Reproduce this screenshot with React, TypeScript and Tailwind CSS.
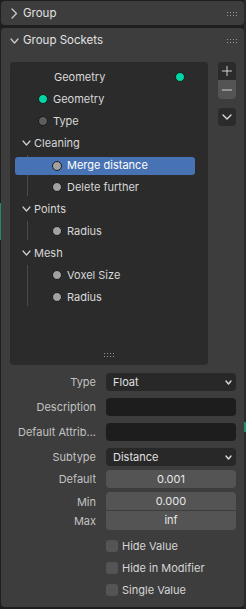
import { Plus, Minus } from "lucide-react";

const GREEN = "#00d6a3";
const FLOAT = "#a1a1a1";
const MENU = "#5d5d5d";

function Grip({ className }: { className?: string }) {
  return (
    <svg width="11" height="4" viewBox="0 0 11 4" className={className}>
      {[0, 3, 6, 9].map((x) =>
        [0, 3].map((y) => <rect key={`${x}-${y}`} x={x} y={y} width="1" height="1" fill="#9a9a9a" />)
      )}
    </svg>
  );
}

function Down({ w = 7, h = 4, color = "#d0d0d0", sw = 1.2 }: { w?: number; h?: number; color?: string; sw?: number }) {
  return (
    <svg width={w + 2} height={h + 2} viewBox={`-1 -1 ${w + 2} ${h + 2}`} className="shrink-0">
      <polyline points={`0,0 ${w / 2},${h} ${w},0`} fill="none" stroke={color} strokeWidth={sw} strokeLinecap="round" strokeLinejoin="round" />
    </svg>
  );
}

function Right() {
  return (
    <svg width="7" height="11" viewBox="-1 -1 7 11" className="shrink-0">
      <polyline points="0,0 4.5,4.5 0,9" fill="none" stroke="#d0d0d0" strokeWidth="1.2" strokeLinecap="round" strokeLinejoin="round" />
    </svg>
  );
}

function Dot({ color }: { color: string }) {
  return (
    <span
      className="block h-[10px] w-[10px] shrink-0 rounded-full border border-[#1b1b1b]"
      style={{ backgroundColor: color }}
    />
  );
}

function SocketRow({ label, dot, child, selected }: { label: string; dot: string; child?: boolean; selected?: boolean }) {
  if (selected) {
    return (
      <div className="flex h-[22px] items-center">
        <div className="ml-[5px] mt-[1px] flex h-[18px] w-[180px] items-center gap-[5px] rounded-[3px] bg-[#4772b3] pl-[37px] text-white">
          <Dot color={dot} />
          <span>{label}</span>
        </div>
      </div>
    );
  }
  return (
    <div className={`flex h-[22px] items-center gap-[5px] ${child ? "pl-[42px]" : "pl-[28px]"}`}>
      <Dot color={dot} />
      <span>{label}</span>
    </div>
  );
}

function Group({ label, children }: { label: string; children: React.ReactNode }) {
  return (
    <div>
      <div className="flex h-[22px] items-center gap-[3px] pl-[12px]">
        <Down />
        <span>{label}</span>
      </div>
      <div className="relative">
        <div className="absolute left-[17px] top-[1px] bottom-[2px] w-px bg-[#4b4b4b]" />
        <div className="relative">{children}</div>
      </div>
    </div>
  );
}

function Label({ children }: { children: React.ReactNode }) {
  return <div className="w-[95px] shrink-0 truncate text-right text-[#c2c2c2]">{children}</div>;
}

function Dropdown({ value }: { value: string }) {
  return (
    <div className="flex h-[18px] w-[130px] items-center justify-between rounded-[4px] bg-[#282828] pl-[7px] pr-[4px] text-[#e0e0e0]">
      <span>{value}</span>
      <Down w={5} h={3} color="#d8d8d8" sw={1.4} />
    </div>
  );
}

function Check({ label }: { label: string }) {
  return (
    <div className="flex h-[22px] items-center pl-[105px]">
      <span className="h-[12px] w-[12px] rounded-[3px] bg-[#545454]" />
      <span className="ml-[4px] text-[#d6d6d6]">{label}</span>
    </div>
  );
}

export default function App() {
  return (
    <div className="flex h-[609px] w-[246px] bg-[#1f1f1f] font-['Inter','Liberation_Sans',sans-serif] text-[11px] text-[#d8d8d8]">
      <div className="w-px shrink-0">
        <div className="mt-[203px] h-[37px] w-px bg-[#1a8f70]" />
      </div>

      <div className="flex flex-1 flex-col gap-[3px] pt-[1px] pb-[2px]">
        {/* Group */}
        <div className="flex h-[24px] items-center rounded-[4px] bg-[#3d3d3d] pl-[10px] pr-[6px] pt-[1px]">
          <Right />
          <span className="ml-[5px] text-[11.5px] text-[#e2e2e2]">Group</span>
          <Grip className="ml-auto" />
        </div>

        {/* Group Sockets */}
        <div className="flex flex-1 flex-col rounded-[4px] bg-[#3d3d3d]">
          <div className="flex h-[26px] items-center pl-[9px] pr-[6px]">
            <Down />
            <span className="ml-[4px] text-[11.5px] text-[#e2e2e2]">Group Sockets</span>
            <Grip className="ml-auto" />
          </div>

          <div className="mt-[8px] flex gap-[10px] pl-[9px]">
            <div className="flex h-[303px] w-[198px] flex-col rounded-[4px] bg-[#2b2b2b] pt-[4px]">
              <div className="flex h-[22px] items-center justify-between pl-[44px] pr-[23px]">
                <span>Geometry</span>
                <Dot color={GREEN} />
              </div>
              <SocketRow label="Geometry" dot={GREEN} />
              <SocketRow label="Type" dot={MENU} />
              <Group label="Cleaning">
                <SocketRow label="Merge distance" dot={FLOAT} selected />
                <SocketRow label="Delete further" dot={FLOAT} child />
              </Group>
              <Group label="Points">
                <SocketRow label="Radius" dot={FLOAT} child />
              </Group>
              <Group label="Mesh">
                <SocketRow label="Voxel Size" dot={FLOAT} child />
                <SocketRow label="Radius" dot={FLOAT} child />
              </Group>
              <div className="mt-auto flex justify-center pb-[8px]">
                <Grip />
              </div>
            </div>

            <div className="flex flex-col">
              <div className="flex h-[18px] w-[18px] items-center justify-center rounded-t-[4px] bg-[#2b2b2b]">
                <Plus className="h-[16px] w-[16px] text-[#e6e6e6]" strokeWidth={1.3} />
              </div>
              <div className="flex h-[19px] w-[18px] items-center justify-center rounded-b-[4px] bg-[#545454]">
                <Minus className="h-[16px] w-[16px] text-[#e6e6e6]" strokeWidth={1.3} />
              </div>
              <div className="mt-[9px] flex h-[18px] w-[18px] items-center justify-center rounded-[4px] bg-[#2b2b2b]">
                <Down w={8} h={4} color="#e0e0e0" sw={1.3} />
              </div>
            </div>
          </div>

          <div className="mt-[8px] flex flex-col gap-[7px]">
            <div className="flex items-center gap-[10px]">
              <Label>Type</Label>
              <Dropdown value="Float" />
            </div>
            <div className="flex items-center gap-[10px]">
              <Label>Description</Label>
              <div className="h-[18px] w-[130px] rounded-[4px] bg-[#1d1d1d]" />
            </div>
            <div className="flex items-center gap-[10px]">
              <Label>Default Attrib...</Label>
              <div className="h-[18px] w-[130px] rounded-[4px] bg-[#1d1d1d]" />
            </div>
            <div className="flex items-center gap-[10px]">
              <Label>Subtype</Label>
              <Dropdown value="Distance" />
            </div>
          </div>

          <div className="mt-[4px] flex items-center gap-[10px]">
            <Label>Default</Label>
            <div className="flex h-[18px] w-[130px] items-center justify-center rounded-[4px] bg-[#545454] text-[#e6e6e6]">0.001</div>
          </div>

          <div className="mt-[4px] flex gap-[10px]">
            <div className="flex w-[95px] flex-col text-right text-[#c2c2c2]">
              <div className="flex h-[19px] items-center justify-end pt-[1px]">Min</div>
              <div className="flex h-[19px] items-center justify-end pt-[2px]">Max</div>
            </div>
            <div className="flex w-[130px] flex-col">
              <div className="flex h-[19px] items-center justify-center rounded-t-[4px] border-b border-[#3d3d3d] bg-[#545454] text-[#e6e6e6]">0.000</div>
              <div className="flex h-[19px] items-center justify-center rounded-b-[4px] bg-[#545454] text-[#e6e6e6]">inf</div>
            </div>
          </div>

          <div className="mt-[5px] flex flex-col">
            <Check label="Hide Value" />
            <Check label="Hide in Modifier" />
            <Check label="Single Value" />
          </div>
        </div>
      </div>

      <div className="w-[2px] shrink-0 bg-[#2a2a2a]">
        <div className="mt-[422px] h-[10px] w-[2px] bg-[#1a8f70]" />
      </div>
    </div>
  );
}
